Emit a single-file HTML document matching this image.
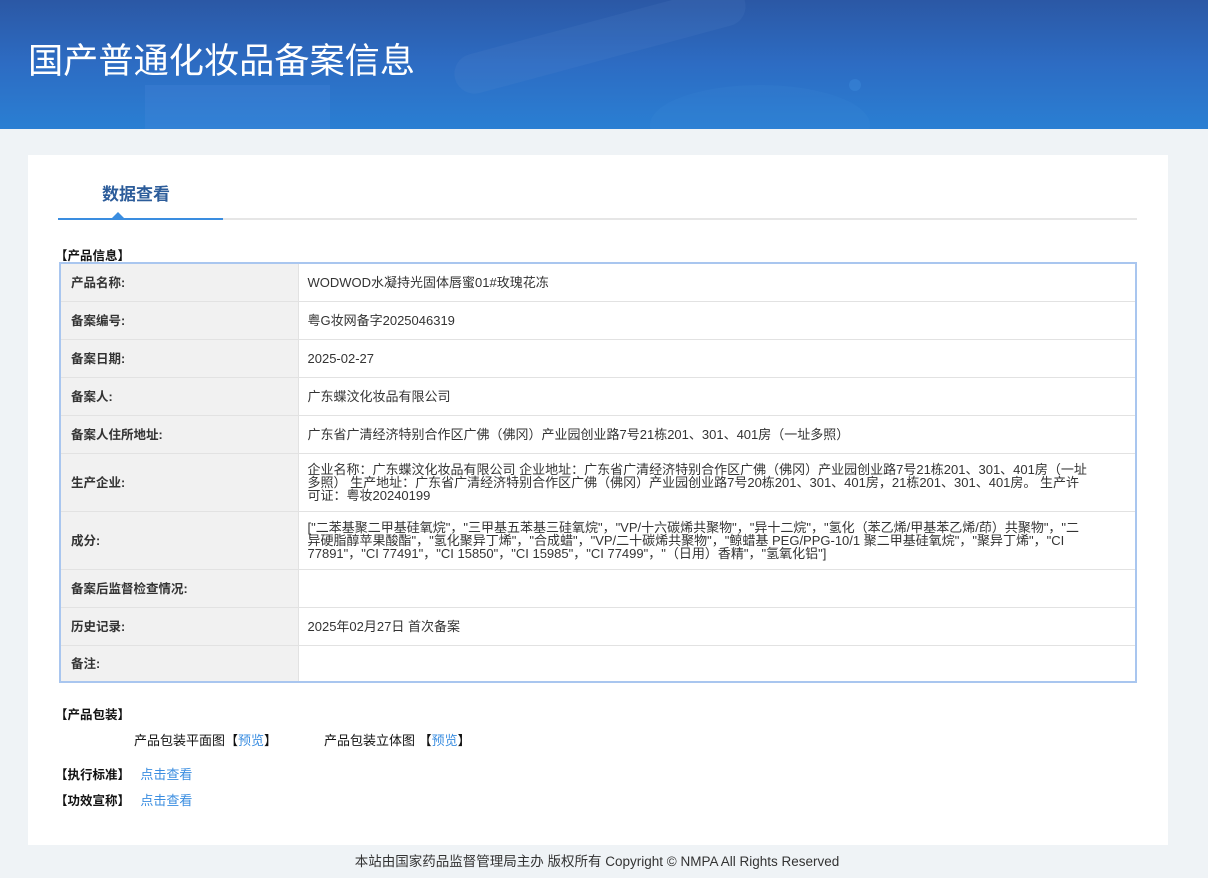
<!DOCTYPE html>
<html><head><meta charset="utf-8"><style>
*{margin:0;padding:0;box-sizing:border-box}
body{width:1208px;height:878px;background:#eff3f6;font-family:"Liberation Sans","Noto Sans CJK SC",sans-serif;color:#333;font-size:13px;position:relative;overflow:hidden}
.hd{position:absolute;left:0;top:0;width:1208px;height:129px;background:linear-gradient(180deg,#2b58a5 0%,#2d6cc3 50%,#2a7fd3 100%);overflow:hidden}
.hd h1{position:absolute;left:28px;top:36px;font-size:35.2px;font-weight:normal;color:#fff;font-family:"Noto Sans CJK SC",sans-serif;line-height:46px}
.blob{position:absolute}
.card{position:absolute;left:28px;top:155px;width:1140px;height:690px;background:#fff}
.tab{position:absolute;top:180px;font-size:17px;font-weight:bold;color:#2c5c9a}
.line{position:absolute;left:58px;top:218px;width:1079px;height:2px;background:#e6e6e6}
.line2{position:absolute;left:58px;top:218px;width:165px;height:2px;background:#3a8de0}
.tri{position:absolute;left:112px;top:212px;border-left:6px solid transparent;border-right:6px solid transparent;border-bottom:6px solid #3a8de0}
.sec{position:absolute;left:55px;font-weight:bold;font-size:12.5px;color:#111}
table{position:absolute;left:59px;top:262px;width:1078px;border-collapse:collapse;border:2px solid #a9c6ef}
td{border-top:1px solid #e2e2e2;vertical-align:middle;font-size:13px}
td.l{width:238px;background:#f1f1f1;font-weight:bold;padding-left:10px;color:#333;border-right:1px solid #e2e2e2;font-size:12.5px;padding-bottom:2px}
td.v{padding-left:9px;padding-right:44px;color:#333;line-height:13px}
a{color:#3a8de0;text-decoration:none}
.ft{position:absolute;top:850px;left:0;width:1194px;text-align:center;font-size:13.5px;color:#333}
</style></head><body>
<div class="hd">
<div class="blob" style="left:145px;top:85px;width:185px;height:60px;background:rgba(80,140,225,.22)"></div>
<div class="blob" style="left:650px;top:85px;width:220px;height:80px;border-radius:50%;background:rgba(70,150,220,.12)"></div>
<div class="blob" style="left:450px;top:20px;width:300px;height:40px;border-radius:30px;transform:rotate(-15deg);background:rgba(120,160,220,.1)"></div>
<div class="blob" style="left:849px;top:79px;width:12px;height:12px;border-radius:50%;background:rgba(70,150,230,.3)"></div>
<h1>国产普通化妆品备案信息</h1>
</div>
<div class="card"></div>
<div class="tab" style="left:102px">数据查看</div>
<div class="line"></div><div class="line2"></div><div class="tri"></div>
<div class="sec" style="top:245px">【产品信息】</div>
<table>
<tr style="height:38px"><td class="l" style="border-top:none">产品名称:</td><td class="v" style="border-top:none">WODWOD水凝持光固体唇蜜01#玫瑰花冻</td></tr>
<tr style="height:38px"><td class="l">备案编号:</td><td class="v">粤G妆网备字2025046319</td></tr>
<tr style="height:38px"><td class="l">备案日期:</td><td class="v">2025-02-27</td></tr>
<tr style="height:38px"><td class="l">备案人:</td><td class="v">广东蝶汶化妆品有限公司</td></tr>
<tr style="height:38px"><td class="l">备案人住所地址:</td><td class="v">广东省广清经济特别合作区广佛（佛冈）产业园创业路7号21栋201、301、401房（一址多照）</td></tr>
<tr style="height:58px"><td class="l">生产企业:</td><td class="v">企业名称：广东蝶汶化妆品有限公司 企业地址：广东省广清经济特别合作区广佛（佛冈）产业园创业路7号21栋201、301、401房（一址多照） 生产地址：广东省广清经济特别合作区广佛（佛冈）产业园创业路7号20栋201、301、401房，21栋201、301、401房。 生产许可证：粤妆20240199</td></tr>
<tr style="height:58px"><td class="l">成分:</td><td class="v">["二苯基聚二甲基硅氧烷"，"三甲基五苯基三硅氧烷"，"VP/十六碳烯共聚物"，"异十二烷"，"氢化（苯乙烯/甲基苯乙烯/茚）共聚物"，"二异硬脂醇苹果酸酯"，"氢化聚异丁烯"，"合成蜡"，"VP/二十碳烯共聚物"，"鲸蜡基 PEG/PPG-10/1 聚二甲基硅氧烷"，"聚异丁烯"，"CI 77891"，"CI 77491"，"CI 15850"，"CI 15985"，"CI 77499"，"（日用）香精"，"氢氧化铝"]</td></tr>
<tr style="height:38px"><td class="l">备案后监督检查情况:</td><td class="v"></td></tr>
<tr style="height:38px"><td class="l">历史记录:</td><td class="v">2025年02月27日 首次备案</td></tr>
<tr style="height:37px"><td class="l">备注:</td><td class="v"></td></tr>
</table>
<div class="sec" style="top:704px">【产品包装】</div>
<div style="position:absolute;left:134px;top:730px;font-size:13px;color:#111">产品包装平面图【<a>预览</a>】</div>
<div style="position:absolute;left:324px;top:730px;font-size:13px;color:#111">产品包装立体图 【<a>预览</a>】</div>
<div class="sec" style="top:764px">【执行标准】 &nbsp;&nbsp;<a style="font-weight:normal;font-size:13px">点击查看</a></div>
<div class="sec" style="top:790px">【功效宣称】 &nbsp;&nbsp;<a style="font-weight:normal;font-size:13px">点击查看</a></div>
<div class="ft">本站由国家药品监督管理局主办 版权所有 Copyright © NMPA All Rights Reserved</div>
</body></html>
